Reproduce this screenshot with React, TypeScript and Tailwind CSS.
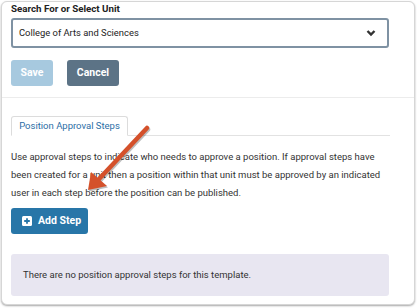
import React from "react";

const ChevronDown = () => (
  <svg width="10" height="8" viewBox="0 0 10 8" className="text-[#333]">
    <path d="M1.5 2 L5 5.5 L8.5 2" fill="none" stroke="currentColor" strokeWidth="2.4" />
  </svg>
);

const PlusSquare = () => (
  <svg width="10" height="10" viewBox="0 0 10 10">
    <rect x="0" y="0" width="10" height="10" rx="1.5" fill="#fff" />
    <path d="M5 2.2 V7.8 M2.2 5 H7.8" stroke="#2876a8" strokeWidth="1.8" />
  </svg>
);

const Arrow = () => (
  <svg
    className="absolute left-0 top-0 pointer-events-none"
    width="418"
    height="308"
    viewBox="0 0 418 308"
  >
    <g transform="translate(1 1.5)" opacity="0.25">
      <line x1="147" y1="128" x2="99" y2="179" stroke="#000" strokeWidth="4.5" strokeLinecap="round" />
      <polygon points="88,190 91,172 107,186" fill="#000" />
    </g>
    <line x1="147" y1="128" x2="99" y2="179" stroke="#d4512b" strokeWidth="4.5" strokeLinecap="round" />
    <polygon points="88,190 91,172 107,186" fill="#d4512b" />
  </svg>
);

export default function App() {
  return (
    <div className="relative w-[418px] h-[308px] bg-white pl-[1px] pt-[1px] font-['Roboto',sans-serif] text-[#333]">
      <div className="w-[414px] h-[304px] rounded-md border border-[#d6d6d6] shadow-[0_1px_2px_rgba(0,0,0,0.35)] bg-white overflow-hidden">
        <div className="px-[9px]">
          <div className="text-[9.75px] leading-[14px] font-bold text-[#222]">Search For or Select Unit</div>
          <div className="mt-[2px] w-[378px] h-[30px] border-2 border-[#7f92a3] rounded-[3px] flex items-center justify-between pl-[6px] pr-[11px]">
            <span className="text-[9.4px] text-[#222]">College of Arts and Sciences</span>
            <ChevronDown />
          </div>
          <div className="mt-[12px] flex gap-[14px]">
            <button className="w-[42px] h-[26px] rounded-[3px] bg-[#a7c9df] text-white text-[10.5px] font-bold">
              Save
            </button>
            <button className="w-[52px] h-[26px] rounded-[3px] bg-[#5c7386] text-white text-[10.5px] font-bold">
              Cancel
            </button>
          </div>
        </div>
        <div className="mt-[11px] border-t border-[#ececec]" />
        <div className="px-[9px] pt-[18px]">
          <div className="w-[379px] border-b border-[#e2e2e2] flex">
            <div className="w-[117px] h-[20px] -mb-[1px] border border-[#dcdcdc] border-b-white rounded-t-[3px] bg-white flex items-center justify-center text-[9.5px] text-[#2b6ea6] whitespace-nowrap">
              Position Approval Steps
            </div>
          </div>
          <p className="mt-[12px] text-[9.5px] leading-[18px] text-[#333] w-[386px]">
            Use approval steps to indicate who needs to approve a position. If approval steps have
            been created for a unit then a position within that unit must be approved by an indicated
            user in each step before the position can be published.
          </p>
          <button className="mt-[6px] h-[26px] w-[77px] rounded-[3px] bg-[#2876a8] text-white text-[10.5px] font-bold flex items-center gap-[6px] pl-[11px] whitespace-nowrap">
            <PlusSquare />
            Add Step
          </button>
          <div className="mt-[20px] w-[378px] h-[42px] rounded-[3px] bg-[#e8e6f1] flex items-center pl-[12px] text-[9.5px] text-[#333]">
            There are no position approval steps for this template.
          </div>
        </div>
      </div>
      <Arrow />
    </div>
  );
}
